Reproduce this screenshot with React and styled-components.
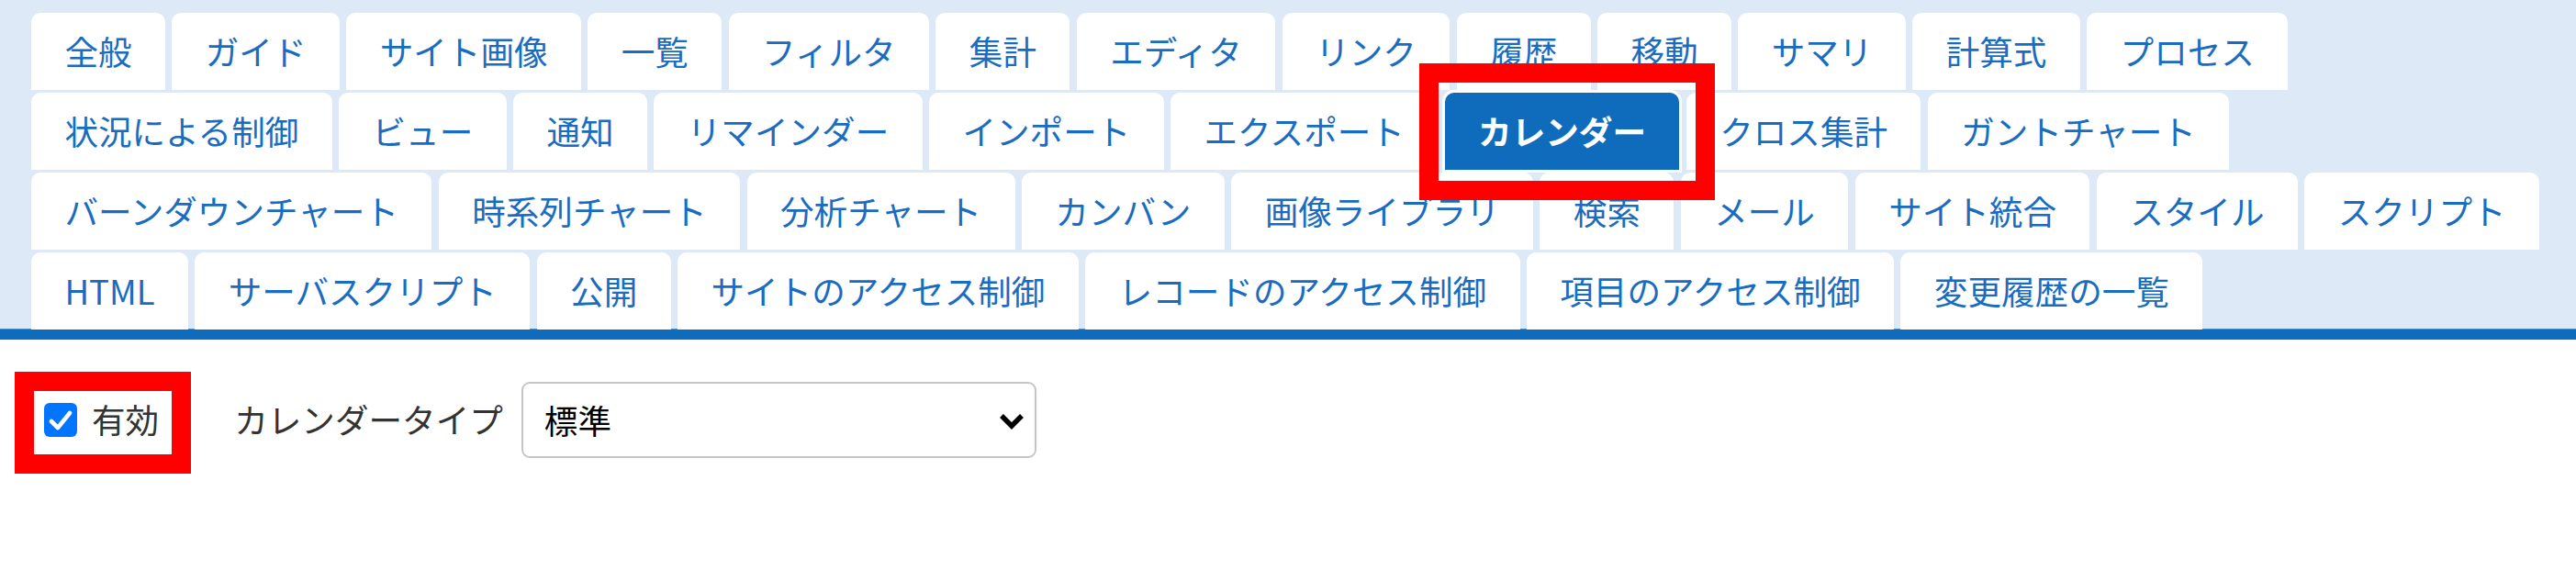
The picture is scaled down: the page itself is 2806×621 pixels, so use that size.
import React from "react";
import styled, { createGlobalStyle, css } from "styled-components";

const GlobalStyle = createGlobalStyle`
  html, body {
    margin: 0;
    padding: 0;
    background: #ffffff;
  }
  body {
    font-family: "Noto Sans CJK JP", "Noto Sans", sans-serif;
  }
`;

const Page = styled.div`
  position: relative;
  width: 2806px;
  height: 621px;
  overflow: hidden;
  background: #ffffff;
`;

const TabHeader = styled.div`
  display: flex;
  flex-direction: column;
  gap: 3px;
  padding: 14px 34px 0;
  background: #dde9f6;
  border-bottom: 11px solid #0f6cbd;
  box-shadow: inset 0 -1px 0 #4d93d0;
`;

const TabRow = styled.div`
  display: flex;
  gap: 7.4px;
  height: 84px;
`;

const Tab = styled.div`
  display: flex;
  align-items: center;
  justify-content: center;
  padding: 0 36.4px;
  background: #ffffff;
  border-radius: 10px 10px 0 0;
  font-size: 36.6px;
  line-height: 1;
  color: #1a6cc0;
  white-space: nowrap;
  ${(p) =>
    p.$active &&
    css`
      position: relative;
      background: #0f6cbd;
      color: #ffffff;
      font-weight: 700;
      box-shadow: 0 0 0 3px #ffffff;
    `}
`;

const Content = styled.div`
  display: flex;
  align-items: center;
  padding: 46px 0 0 48px;
`;

const CheckField = styled.label`
  display: flex;
  align-items: center;
  gap: 16px;
`;

const CheckBox = styled.span`
  display: flex;
  align-items: center;
  justify-content: center;
  width: 36px;
  height: 37px;
  border-radius: 6px;
  background: #0075ff;
`;

const FieldText = styled.span`
  font-size: 36.6px;
  line-height: 1;
  color: #333333;
  white-space: nowrap;
  margin-left: ${(p) => p.$offset || 0}px;
`;

const SelectWrap = styled.div`
  position: relative;
  margin-left: 20px;
  width: 561px;
  height: 83px;
`;

const Select = styled.select`
  appearance: none;
  -webkit-appearance: none;
  box-sizing: border-box;
  width: 100%;
  height: 100%;
  padding: 0 60px 0 23px;
  border: 2px solid #c6c6c6;
  border-radius: 9px;
  background: #ffffff;
  font-family: "Noto Sans CJK JP", "Noto Sans", sans-serif;
  font-size: 36.6px;
  color: #000000;
  outline: none;
`;

const Chevron = styled.svg`
  position: absolute;
  right: 13px;
  top: 33px;
  width: 28px;
  height: 19px;
  pointer-events: none;
`;

const Annotation = styled.div`
  position: absolute;
  box-sizing: border-box;
  border: 21px solid #fe0000;
  pointer-events: none;
`;

const rows = [
  ["全般", "ガイド", "サイト画像", "一覧", "フィルタ", "集計", "エディタ", "リンク", "履歴", "移動", "サマリ", "計算式", "プロセス"],
  ["状況による制御", "ビュー", "通知", "リマインダー", "インポート", "エクスポート", "カレンダー", "クロス集計", "ガントチャート"],
  ["バーンダウンチャート", "時系列チャート", "分析チャート", "カンバン", "画像ライブラリ", "検索", "メール", "サイト統合", "スタイル", "スクリプト"],
  ["HTML", "サーバスクリプト", "公開", "サイトのアクセス制御", "レコードのアクセス制御", "項目のアクセス制御", "変更履歴の一覧"],
];

const ACTIVE = "カレンダー";

export default function App() {
  return (
    <Page>
      <GlobalStyle />
      <TabHeader>
        {rows.map((row, i) => (
          <TabRow key={i}>
            {row.map((label) => (
              <Tab key={label} $active={label === ACTIVE}>
                {label}
              </Tab>
            ))}
          </TabRow>
        ))}
      </TabHeader>
      <Content>
        <CheckField>
          <CheckBox>
            <svg width="26" height="24" viewBox="0 0 26 24">
              <polyline
                points="3,13 10,20 23,4"
                fill="none"
                stroke="#ffffff"
                strokeWidth="4.6"
                strokeLinecap="round"
                strokeLinejoin="round"
              />
            </svg>
          </CheckBox>
          <FieldText>有効</FieldText>
        </CheckField>
        <FieldText $offset={82}>カレンダータイプ</FieldText>
        <SelectWrap>
          <Select defaultValue="standard">
            <option value="standard">標準</option>
            <option value="fullcalendar">FullCalendar</option>
          </Select>
          <Chevron viewBox="0 0 28 19">
            <polyline
              points="3,4 14,15 25,4"
              fill="none"
              stroke="#000000"
              strokeWidth="5.5"
              strokeLinejoin="miter"
            />
          </Chevron>
        </SelectWrap>
      </Content>
      <Annotation style={{ left: 1546, top: 69, width: 322, height: 149 }} />
      <Annotation style={{ left: 16, top: 405, width: 192, height: 111 }} />
    </Page>
  );
}
